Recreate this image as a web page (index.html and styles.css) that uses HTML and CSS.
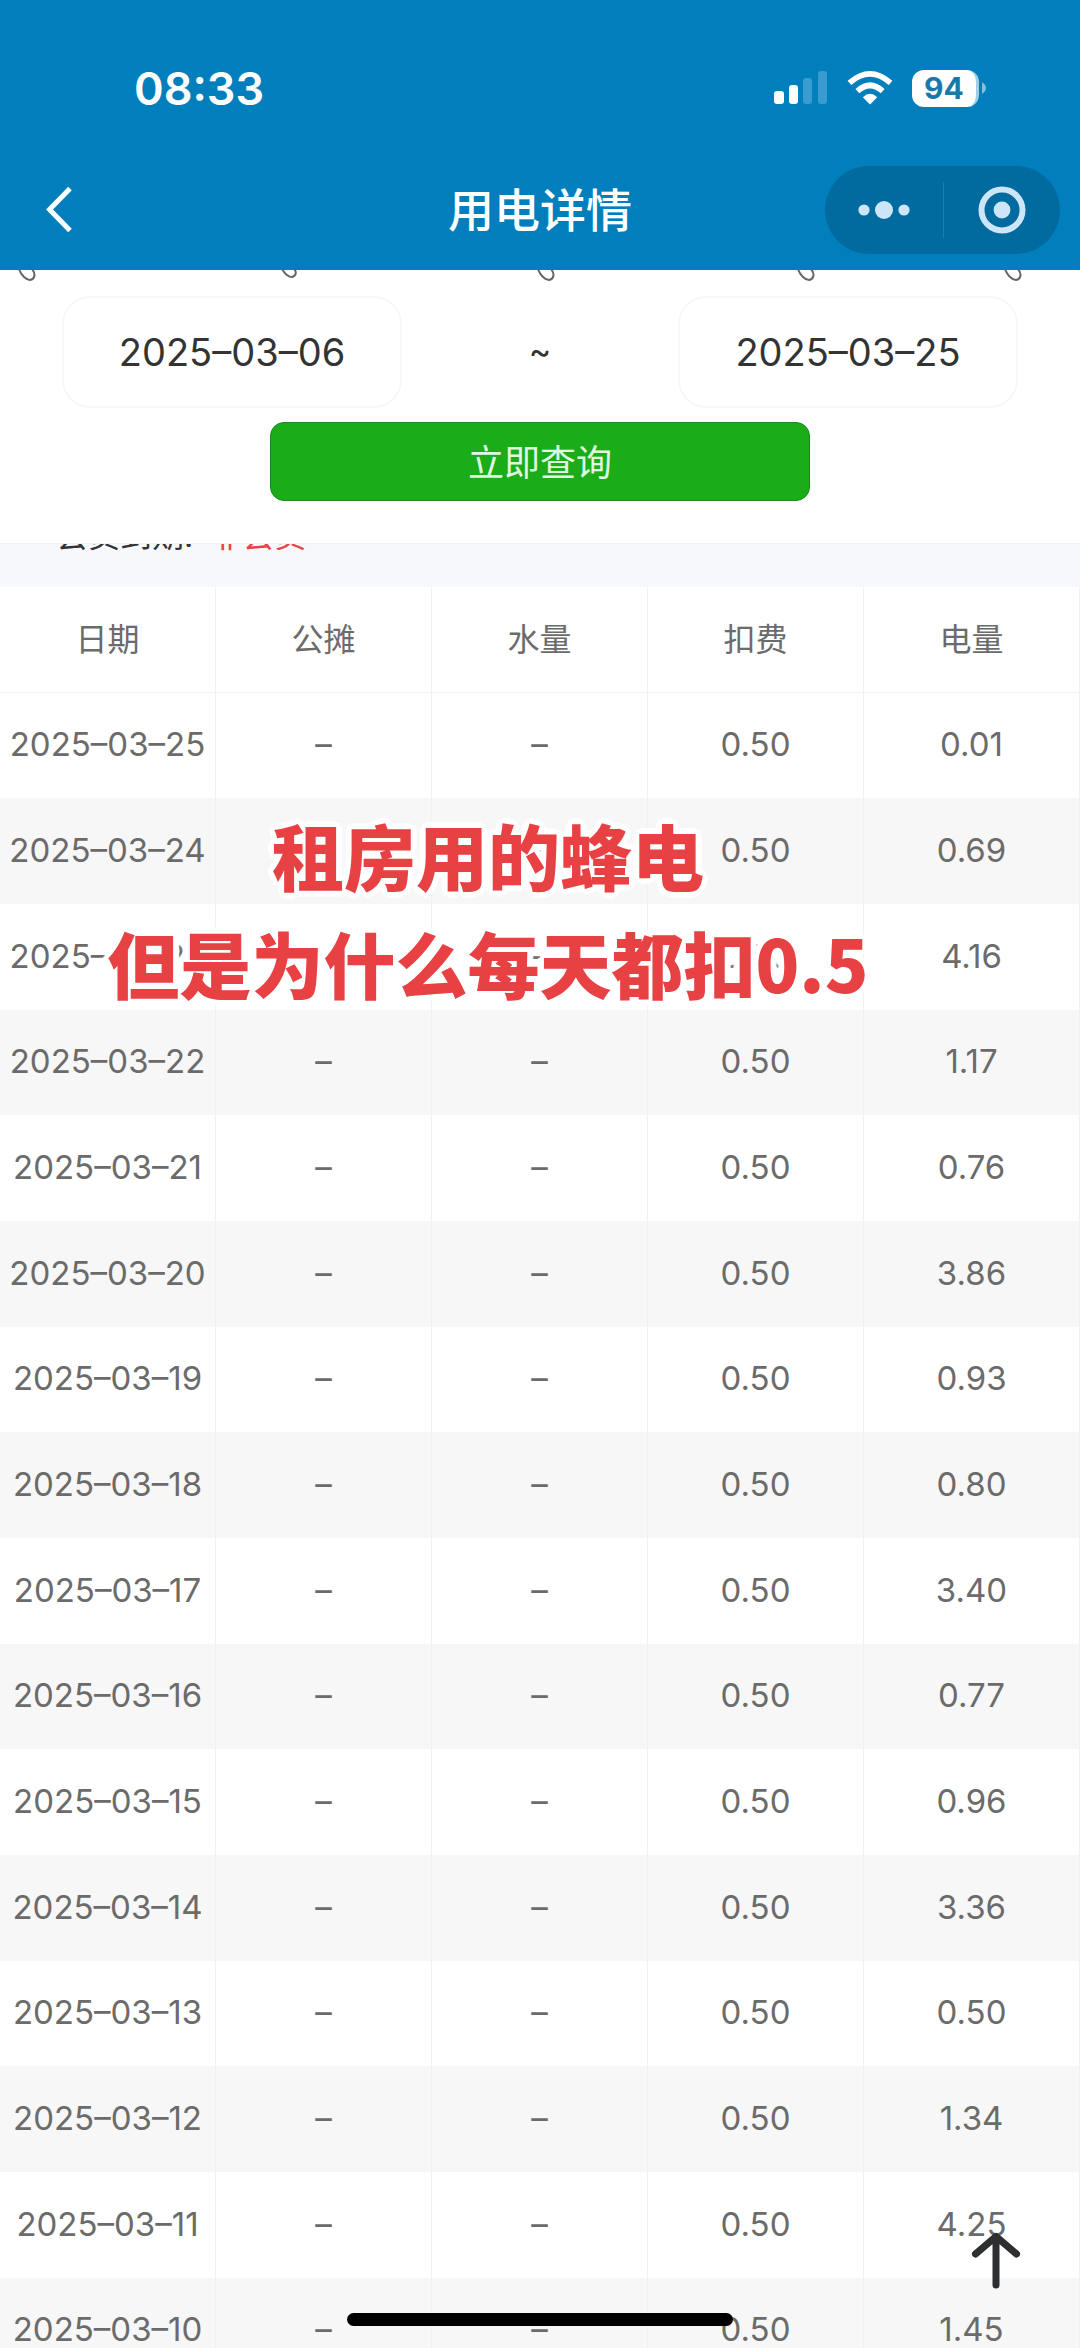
FILE: index.html
```html
<!DOCTYPE html>
<html lang="zh-CN">
<head>
<meta charset="utf-8">
<meta name="viewport" content="width=device-width, initial-scale=1">
<title>用电详情</title>
<link rel="stylesheet" href="styles.css">
</head>
<body>
<header class="top">
  <div class="status">
    <span class="clock">08:33</span>
    <div class="status-icons">
      <svg class="signal" width="54" height="36" viewBox="0 0 54 36" aria-hidden="true">
        <rect x="0" y="21" width="10" height="13" rx="3"/>
        <rect x="15" y="15" width="9" height="19" rx="3"/>
        <rect class="dim" x="29" y="8" width="9" height="26" rx="3"/>
        <rect class="dim" x="44" y="1" width="9" height="33" rx="3"/>
      </svg>
      <svg class="wifi" width="46" height="36" viewBox="0 0 46 36" aria-hidden="true">
        <path d="M23 34.500 L15.800 27.200 Q23 20.500 30.200 27.200 Z"/>
        <path d="M12.300 23.300 L8.400 19 Q23 5.500 37.600 19 L33.700 23.300 Q23 13.500 12.300 23.300 Z"/>
        <path d="M4.300 15 L.6 10.800 Q23 -8.600 45.400 10.800 L41.700 15 Q23 -1.500 4.300 15 Z"/>
      </svg>
      <span class="battery"><span class="level">94</span><svg width="5" height="12" viewBox="0 0 5 12" aria-hidden="true"><path d="M0 0 Q8 6 0 12 Z"/></svg></span>
    </div>
  </div>
  <nav class="bar">
    <button class="back" type="button" aria-label="返回">
      <svg width="28" height="48" viewBox="0 0 28 48"><path d="M24 2.500 L3.500 23.500 L24 44.500"/></svg>
    </button>
    <h1 class="title">用电详情</h1>
    <div class="capsule">
      <button type="button" aria-label="更多">
        <svg width="52" height="20" viewBox="0 0 52 20"><circle cx="6" cy="10" r="5.600"/><circle cx="26" cy="10" r="9"/><circle cx="46" cy="10" r="5.600"/></svg>
      </button>
      <button type="button" aria-label="关闭">
        <svg width="48" height="48" viewBox="0 0 48 48"><circle class="ring" cx="24" cy="24" r="20.500"/><circle cx="24" cy="24" r="8.400"/></svg>
      </button>
    </div>
  </nav>
</header>

<form class="query">
  <svg class="axis" viewBox="0 0 1080 12" aria-hidden="true">
    <path d="M19 -1 C21 5 26 10 30 10 C35 9 36 4 32 -1"/>
    <path d="M282 -1 C285 4 289 7 292 7 C296 6 297 2 294 -1"/>
    <path d="M538 -1 C540 5 545 10 549 10 C554 9 555 4 551 -1"/>
    <path d="M798 -1 C800 5 805 10 809 10 C814 9 815 4 811 -1"/>
    <path d="M1005 -1 C1007 5 1012 10 1016 10 C1021 9 1022 4 1018 -1"/>
  </svg>
  <div class="range">
    <input class="date" type="text" value="2025–03–06" aria-label="开始日期" readonly>
    <span class="tilde">~</span>
    <input class="date" type="text" value="2025–03–25" aria-label="结束日期" readonly>
  </div>
  <button class="submit" type="button">立即查询</button>
</form>

<main class="content">
  <div class="member"><p>会员到期: <span class="none">非会员</span></p></div>
  <table class="usage">
    <thead><tr><th>日期</th><th>公摊</th><th>水量</th><th>扣费</th><th>电量</th></tr></thead>
    <tbody>
      <tr><td>2025–03–25</td><td>–</td><td>–</td><td>0.50</td><td>0.01</td></tr>
      <tr><td>2025–03–24</td><td>–</td><td>–</td><td>0.50</td><td>0.69</td></tr>
      <tr><td>2025–03–23</td><td>–</td><td>–</td><td>0.50</td><td>4.16</td></tr>
      <tr><td>2025–03–22</td><td>–</td><td>–</td><td>0.50</td><td>1.17</td></tr>
      <tr><td>2025–03–21</td><td>–</td><td>–</td><td>0.50</td><td>0.76</td></tr>
      <tr><td>2025–03–20</td><td>–</td><td>–</td><td>0.50</td><td>3.86</td></tr>
      <tr><td>2025–03–19</td><td>–</td><td>–</td><td>0.50</td><td>0.93</td></tr>
      <tr><td>2025–03–18</td><td>–</td><td>–</td><td>0.50</td><td>0.80</td></tr>
      <tr><td>2025–03–17</td><td>–</td><td>–</td><td>0.50</td><td>3.40</td></tr>
      <tr><td>2025–03–16</td><td>–</td><td>–</td><td>0.50</td><td>0.77</td></tr>
      <tr><td>2025–03–15</td><td>–</td><td>–</td><td>0.50</td><td>0.96</td></tr>
      <tr><td>2025–03–14</td><td>–</td><td>–</td><td>0.50</td><td>3.36</td></tr>
      <tr><td>2025–03–13</td><td>–</td><td>–</td><td>0.50</td><td>0.50</td></tr>
      <tr><td>2025–03–12</td><td>–</td><td>–</td><td>0.50</td><td>1.34</td></tr>
      <tr><td>2025–03–11</td><td>–</td><td>–</td><td>0.50</td><td>4.25</td></tr>
      <tr><td>2025–03–10</td><td>–</td><td>–</td><td>0.50</td><td>1.45</td></tr>
    </tbody>
  </table>
  <p class="caption">租房用的蜂电<br>但是为什么每天都扣0.5</p>
</main>

<button class="to-top" type="button" aria-label="回到顶部">
  <svg width="50" height="58" viewBox="0 0 50 58"><path d="M25 5 V53 M4.500 22 L25 4.500 L45.500 22"/></svg>
</button>
<div class="home"></div>
</body>
</html>
```

FILE: styles.css
```css
* { box-sizing: border-box; }

body {
  margin: 0;
  height: 100vh;
  display: flex;
  flex-direction: column;
  overflow: hidden;
  background: #fff;
  color: #333;
  font-family: Inter, "Noto Sans CJK SC", sans-serif;
}

button {
  margin: 0;
  padding: 0;
  border: 0;
  background: none;
  font: inherit;
}

svg { display: block; }

/* Status bar and navigation */
.top {
  flex: none;
  background: #017fbd;
  color: #fff;
  padding-bottom: 16px;
}

.status {
  display: flex;
  justify-content: space-between;
  align-items: center;
  height: 166px;
  padding: 10px 93px 0 134px;
}

.clock {
  font-size: 45px;
  font-weight: 600;
}

.status-icons {
  display: flex;
  align-items: center;
  gap: 19px;
  fill: #fff;
}

.dim { fill: #3a9bd0; }

.battery {
  display: flex;
  align-items: center;
  gap: 3px;
  fill: #7fc0e3;
}

.level {
  width: 67px;
  height: 37px;
  border-radius: 12px;
  border-right: 3px solid #9fd0ea;
  background: #fff;
  color: #1678ab;
  font-size: 30px;
  font-weight: 700;
  line-height: 37px;
  text-align: center;
}

.bar {
  display: grid;
  grid-template-columns: 1fr auto 1fr;
  align-items: center;
  height: 88px;
  padding: 0 20px;
}

.back {
  justify-self: start;
  margin-left: 26px;
  fill: none;
  stroke: #fff;
  stroke-width: 5;
}

.title {
  margin: 0;
  font-size: 46px;
  font-weight: 500;
  line-height: 64px;
}

.capsule {
  justify-self: end;
  display: grid;
  grid-template-columns: 1fr 1fr;
  align-items: center;
  width: 235px;
  height: 88px;
  border-radius: 44px;
  background: #016a9f;
  fill: #cde6f7;
}

.capsule button {
  display: grid;
  place-items: center;
  height: 56px;
}

.capsule button + button { border-left: 1px solid #1b7dae; }

.ring {
  fill: none;
  stroke: #cde6f7;
  stroke-width: 6;
}

/* Date range query */
.query {
  flex: none;
  display: flex;
  flex-direction: column;
  align-items: center;
  padding-bottom: 42px;
  border-bottom: 1px solid #f0f0f2;
}

.axis {
  width: 100%;
  fill: none;
  stroke: #666;
  stroke-width: 2;
}

.range {
  display: grid;
  grid-template-columns: 340px 1fr 340px;
  align-items: center;
  width: 100%;
  padding: 14px 62px;
}

.date {
  width: 100%;
  height: 112px;
  padding: 0;
  border: 2px solid #f7f7f7;
  border-radius: 28px;
  background: #fff;
  color: #333;
  font: inherit;
  font-size: 38px;
  text-align: center;
  outline: 0;
}

.tilde {
  padding-bottom: 4px;
  font-size: 34px;
  text-align: center;
}

.submit {
  width: 50%;
  height: 79px;
  padding-bottom: 4px;
  border: 1px solid #188a1c;
  border-radius: 14px;
  background: #1aad19;
  color: #e0f8e0;
  font-size: 36px;
}

/* Usage records */
.content {
  position: relative;
  flex: 1;
  min-height: 0;
  overflow: hidden;
}

.member {
  display: flex;
  align-items: flex-end;
  height: 43px;
  padding: 0 56px 27px;
  overflow: hidden;
  background: #f7f8fc;
  font-size: 32px;
  line-height: 48px;
}

.member p { margin: 0; }

.none {
  margin-left: 8px;
  color: #e64548;
}

.usage {
  width: 100%;
  table-layout: fixed;
  border-collapse: separate;
  border-spacing: 0;
  color: #6b6b6b;
  font-size: 33px;
  text-align: center;
}

.usage th,
.usage td {
  height: 106px;
  padding: 0 0 3px;
  border-right: 1px solid #f1f1f1;
  font-weight: 400;
}

.usage th {
  padding-bottom: 6px;
  border-bottom: 1px solid #f1f1f1;
  font-size: 32px;
}

.usage tbody tr:nth-child(3n+1) td { height: 105px; }

.usage tbody tr:nth-child(even) { background: #f7f7f7; }

.caption {
  position: absolute;
  top: 256px;
  left: 0;
  right: 104px;
  margin: 0;
  color: #e84143;
  font-family: "Noto Sans CJK SC", sans-serif;
  font-size: 72px;
  font-weight: 900;
  line-height: 108px;
  text-align: center;
  text-shadow:
    6px 0 1px #fff, -6px 0 1px #fff, 0 6px 1px #fff, 0 -6px 1px #fff,
    4px 4px 1px #fff, -4px 4px 1px #fff, 4px -4px 1px #fff, -4px -4px 1px #fff,
    0 0 8px #fff;
}

.to-top {
  position: fixed;
  right: 59px;
  bottom: 58px;
  fill: none;
  stroke: #2e2f30;
  stroke-width: 7;
  stroke-linecap: round;
  stroke-linejoin: round;
}

.home {
  position: fixed;
  bottom: 22px;
  left: 50%;
  width: 386px;
  height: 13px;
  margin-left: -193px;
  border-radius: 7px;
  background: #000;
}
```
